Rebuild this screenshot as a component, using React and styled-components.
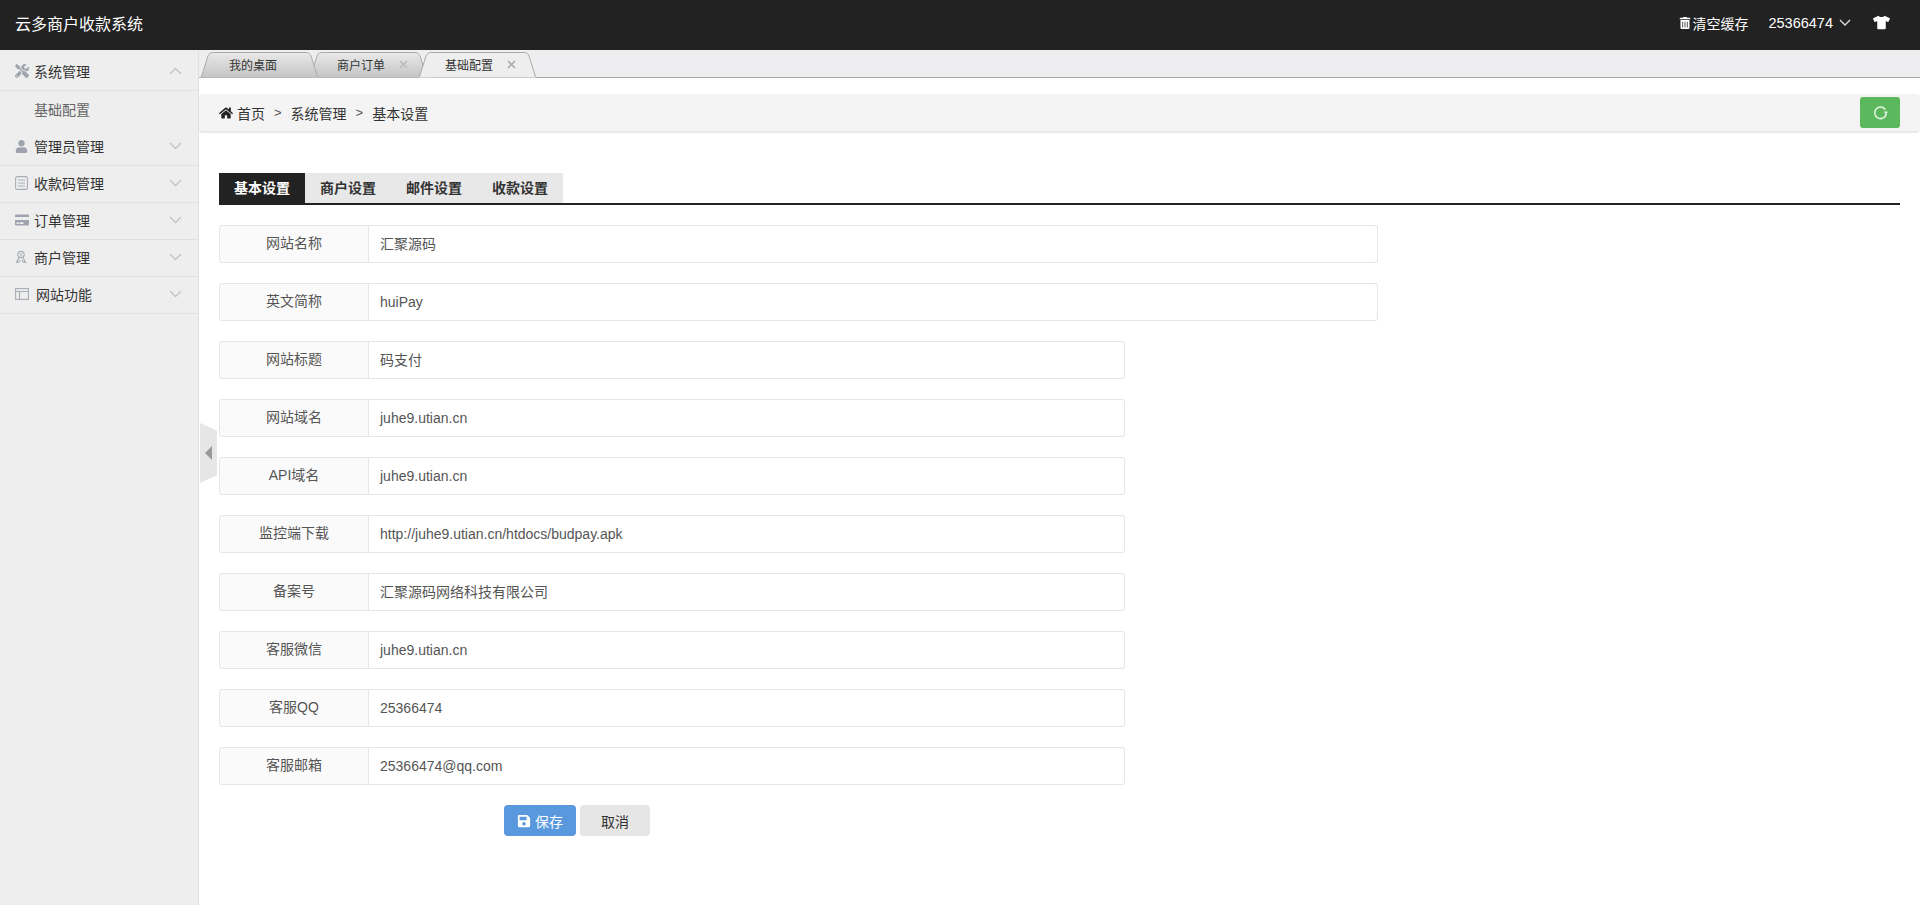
import React from "react";
import styled, { createGlobalStyle } from "styled-components";
import { FaHome, FaSave, FaTrashAlt, FaTshirt, FaTools, FaUser, FaCreditCard } from "react-icons/fa";

const Global = createGlobalStyle`
  html, body { margin: 0; padding: 0; background: #fff; }
  body { font-family: "Liberation Sans", "Noto Sans CJK SC", sans-serif; font-size: 14px; color: #333; }
  * { box-sizing: border-box; }
`;

const Page = styled.div`
  height: 905px;
  overflow: hidden;
  display: flex;
  flex-direction: column;
`;
const Header = styled.header`
  height: 50px;
  flex: none;
  background: #222;
  color: #fff;
  display: flex;
  align-items: center;
  justify-content: space-between;
  padding: 0 30px 5px 15px;
`;
const Brand = styled.div`
  font-size: 16px;
`;
const HeaderRight = styled.div`
  display: flex;
  align-items: center;
`;
const HeaderLink = styled.span`
  display: inline-flex;
  align-items: center;
  gap: 1px;
  font-size: 14px;
  margin-right: 20px;
`;
const UserName = styled.span`
  display: inline-flex;
  align-items: center;
  gap: 6px;
  font-size: 14.5px;
  margin-right: 22px;
`;
const Body = styled.div`
  flex: 1;
  display: flex;
  min-height: 0;
`;
const Sidebar = styled.aside`
  width: 199px;
  flex: none;
  background: #eee;
  border-right: 1px solid #e0e0e0;
  padding-top: 3px;
`;
const MenuTitle = styled.div`
  height: ${p => (p.$first ? 38 : 37)}px;
  border-bottom: 1px solid #e0e0e0;
  display: flex;
  align-items: center;
  padding: 0 16px 2px 15px;
  color: #333;
`;
const MenuIcon = styled.span`
  width: ${p => p.$w || 19}px;
  flex: none;
  display: inline-flex;
  align-items: center;
  color: #9ea3ad;
`;
const MenuLabel = styled.span`
  flex: 1;
`;
const SubItem = styled.div`
  height: 38px;
  line-height: 38px;
  padding-left: 34px;
  color: #666;
`;
const Main = styled.main`
  flex: 1;
  min-width: 0;
  position: relative;
  display: flex;
  flex-direction: column;
`;
const TabStrip = styled.div`
  height: 28px;
  flex: none;
  background: #eeeef0;
  border-bottom: 1px solid #aaa;
  display: flex;
  align-items: flex-end;
  padding-left: 1px;
`;
const Tab = styled.div`
  position: relative;
  width: 119px;
  height: 26px;
  margin-right: -10px;
  margin-bottom: -1px;
  z-index: ${p => p.$z};
  font-size: 12px;
  color: #333;
  display: flex;
  align-items: center;
  padding: 0 0 1px ${p => p.$pad}px;
`;
const TabShape = styled.svg`
  position: absolute;
  inset: 0;
  width: 100%;
  height: 100%;
`;
const TabText = styled.span`
  position: relative;
  width: 48px;
`;
const TabClose = styled.svg`
  position: relative;
  margin-left: 14px;
`;
const Crumbs = styled.div`
  margin-top: 16px;
  height: 39px;
  flex: none;
  background: #f4f4f4;
  border-bottom: 2px solid #e9e9e9;
  border-radius: 4px;
  display: flex;
  align-items: center;
  padding: 0 20px 0 20px;
  color: #333;
`;
const CrumbSep = styled.span`
  margin: 0 9px;
  color: #555;
  font-size: 13px;
`;
const CrumbHome = styled.span`
  display: inline-flex;
  margin-right: 4px;
  color: #222;
`;
const CrumbSpacer = styled.span`
  flex: 1;
`;
const RefreshButton = styled.button`
  width: 40px;
  height: 31px;
  border: 0;
  border-radius: 3px;
  background: #5cb85c;
  padding: 0;
  display: flex;
  align-items: center;
  justify-content: center;
`;
const Content = styled.div`
  padding: 40px 20px 0 20px;
`;
const FormTabs = styled.div`
  display: flex;
  height: 32px;
  border-bottom: 2px solid #222;
  margin-bottom: 20px;
`;
const FormTab = styled.div`
  width: 86px;
  height: 30px;
  text-align: center;
  line-height: 30px;
  font-weight: bold;
  font-size: 14px;
  background: ${p => (p.$active ? "#222" : "#e8e8e8")};
  color: ${p => (p.$active ? "#fff" : "#333")};
  box-shadow: ${p => (p.$active ? "0 2px 0 #222" : "none")};
`;
const Row = styled.div`
  display: flex;
  height: 38px;
  width: ${p => (p.$wide ? 1159 : 906)}px;
  margin-bottom: 20px;
`;
const RowLabel = styled.div`
  width: 150px;
  flex: none;
  background: #fafafa;
  border: 1.5px solid #e6e6e6;
  border-radius: 3px 0 0 3px;
  color: #555;
  text-align: center;
  line-height: 35px;
`;
const RowValue = styled.div`
  flex: 1;
  border: 1.5px solid #e6e6e6;
  border-left-width: 0;
  border-radius: 0 3px 3px 0;
  color: #555;
  padding-left: 11px;
  line-height: 37px;
`;
const Actions = styled.div`
  display: flex;
  gap: 4px;
  margin-left: 285px;
`;
const SaveButton = styled.button`
  width: 72px;
  height: 31px;
  border: 0;
  border-radius: 4px;
  background: #5a98de;
  color: #fff;
  font: inherit;
  display: flex;
  align-items: center;
  justify-content: center;
  gap: 4px;
  padding: 0;
`;
const CancelButton = styled.button`
  width: 70px;
  height: 31px;
  border: 0;
  border-radius: 4px;
  background: #e6e6e6;
  color: #333;
  font: inherit;
  padding: 0;
`;
const Toggle = styled.div`
  position: absolute;
  left: 1px;
  top: 373px;
  width: 17px;
  height: 60px;
  background: #e6e6e6;
  clip-path: polygon(0 0, 100% 13%, 100% 87%, 0 100%);
  display: flex;
  align-items: center;
  padding-left: 5px;
`;
const ToggleArrow = styled.span`
  width: 0;
  height: 0;
  border-style: solid;
  border-width: 7px 7px 7px 0;
  border-color: transparent #999 transparent transparent;
`;

const Chevron = ({ up }) => (
  <svg width="13" height="8" viewBox="0 0 13 8" fill="none" stroke="#c2c2c2" strokeWidth="1.3">
    <path d={up ? "M1 7l5.5-5.5L12 7" : "M1 1l5.5 5.5L12 1"} />
  </svg>
);
const ListIcon = () => (
  <svg width="13" height="14" viewBox="0 0 13 14" fill="none" stroke="#a8adb6" strokeWidth="1.1">
    <rect x=".6" y=".6" width="11.8" height="12.8" rx="1.5" />
    <path d="M3 4h7M3 7h7M3 10h7" />
  </svg>
);
const MerchantIcon = () => (
  <svg width="12" height="14" viewBox="0 0 12 14" fill="none" stroke="#a8adb6" strokeWidth="1.2">
    <circle cx="6" cy="4.5" r="3.2" />
    <path d="M4 7.5L1.5 12.5 4 12l1-2M8 7.5l2.5 5L8 12l-1-2M6 3v3" />
  </svg>
);
const WindowIcon = () => (
  <svg width="14" height="12" viewBox="0 0 14 12" fill="none" stroke="#a8adb6" strokeWidth="1.1">
    <rect x=".6" y=".6" width="12.8" height="10.8" />
    <path d="M.6 3.5h12.8M4.5 3.5v8" />
  </svg>
);
const RefreshIcon = () => (
  <svg width="15" height="15" viewBox="0 0 15 15" fill="none">
    <path d="M12.4 4.6A5.8 5.8 0 1 0 13.3 8.6" stroke="#e6f5e6" strokeWidth="1.5" />
    <path d="M10.8 6.6h4.2L13 9.6z" fill="#e6f5e6" />
  </svg>
);

const tabs = [
  { name: "我的桌面", z: 2, pad: 29 },
  { name: "商户订单", z: 1, pad: 28, close: true },
  { name: "基础配置", z: 3, pad: 27, close: true, active: true },
];
const TabOutline = ({ active, id }) => (
  <TabShape viewBox="0 0 119 26" preserveAspectRatio="none">
    <defs>
      <linearGradient id={id} x1="0" y1="0" x2="0" y2="1">
        <stop offset="0" stopColor="#e9e9e9" />
        <stop offset="1" stopColor="#c4c4c4" />
      </linearGradient>
    </defs>
    <path
      d="M0 25.5C1 25.5 1.5 24.5 2 23L8 4C9 1.5 10.5 .5 13 .5H106C108.5 .5 110 1.5 111 4L117 23C117.5 24.5 118 25.5 119 25.5"
      fill={active ? "#eeeeef" : `url(#${id})`}
      stroke="#aaa"
    />
  </TabShape>
);

const menu = [
  { name: "管理员管理", icon: <FaUser size={13} /> },
  { name: "收款码管理", icon: <ListIcon /> },
  { name: "订单管理", icon: <FaCreditCard size={14} /> },
  { name: "商户管理", icon: <MerchantIcon /> },
  { name: "网站功能", icon: <WindowIcon />, w: 21 },
];
const rows = [
  ["网站名称", "汇聚源码", true],
  ["英文简称", "huiPay", true],
  ["网站标题", "码支付"],
  ["网站域名", "juhe9.utian.cn"],
  ["API域名", "juhe9.utian.cn"],
  ["监控端下载", "http://juhe9.utian.cn/htdocs/budpay.apk"],
  ["备案号", "汇聚源码网络科技有限公司"],
  ["客服微信", "juhe9.utian.cn"],
  ["客服QQ", "25366474"],
  ["客服邮箱", "25366474@qq.com"],
];

export default function App() {
  return (
    <Page>
      <Global />
      <Header>
        <Brand>云多商户收款系统</Brand>
        <HeaderRight>
          <HeaderLink><FaTrashAlt size={12} />清空缓存</HeaderLink>
          <UserName>
            25366474
            <svg width="12" height="8" viewBox="0 0 12 8" fill="none" stroke="#ddd" strokeWidth="1.4"><path d="M1 1l5 5 5-5" /></svg>
          </UserName>
          <FaTshirt size={17} />
        </HeaderRight>
      </Header>
      <Body>
        <Sidebar>
          <MenuTitle $first>
            <MenuIcon><FaTools size={14} /></MenuIcon>
            <MenuLabel>系统管理</MenuLabel>
            <Chevron up />
          </MenuTitle>
          <SubItem>基础配置</SubItem>
          {menu.map(m => (
            <MenuTitle key={m.name}>
              <MenuIcon $w={m.w}>{m.icon}</MenuIcon>
              <MenuLabel>{m.name}</MenuLabel>
              <Chevron />
            </MenuTitle>
          ))}
        </Sidebar>
        <Main>
          <Toggle><ToggleArrow /></Toggle>
          <TabStrip>
            {tabs.map((t, i) => (
              <Tab key={t.name} $z={t.z} $pad={t.pad}>
                <TabOutline active={t.active} id={`tabfill${i}`} />
                <TabText>{t.name}</TabText>
                {t.close && (
                  <TabClose width="9" height="9" viewBox="0 0 9 9" stroke={t.active ? "#aaa" : "#bbb"} strokeWidth="1.6">
                    <path d="M1 1l7 7M8 1L1 8" />
                  </TabClose>
                )}
              </Tab>
            ))}
          </TabStrip>
          <Crumbs>
            <CrumbHome><FaHome size={14} /></CrumbHome>
            首页<CrumbSep>&gt;</CrumbSep>系统管理<CrumbSep>&gt;</CrumbSep>基本设置
            <CrumbSpacer />
            <RefreshButton aria-label="刷新"><RefreshIcon /></RefreshButton>
          </Crumbs>
          <Content>
            <FormTabs>
              <FormTab $active>基本设置</FormTab>
              <FormTab>商户设置</FormTab>
              <FormTab>邮件设置</FormTab>
              <FormTab>收款设置</FormTab>
            </FormTabs>
            {rows.map(([label, value, wide]) => (
              <Row key={label} $wide={wide}>
                <RowLabel>{label}</RowLabel>
                <RowValue>{value}</RowValue>
              </Row>
            ))}
            <Actions>
              <SaveButton><FaSave size={14} />保存</SaveButton>
              <CancelButton>取消</CancelButton>
            </Actions>
          </Content>
        </Main>
      </Body>
    </Page>
  );
}
